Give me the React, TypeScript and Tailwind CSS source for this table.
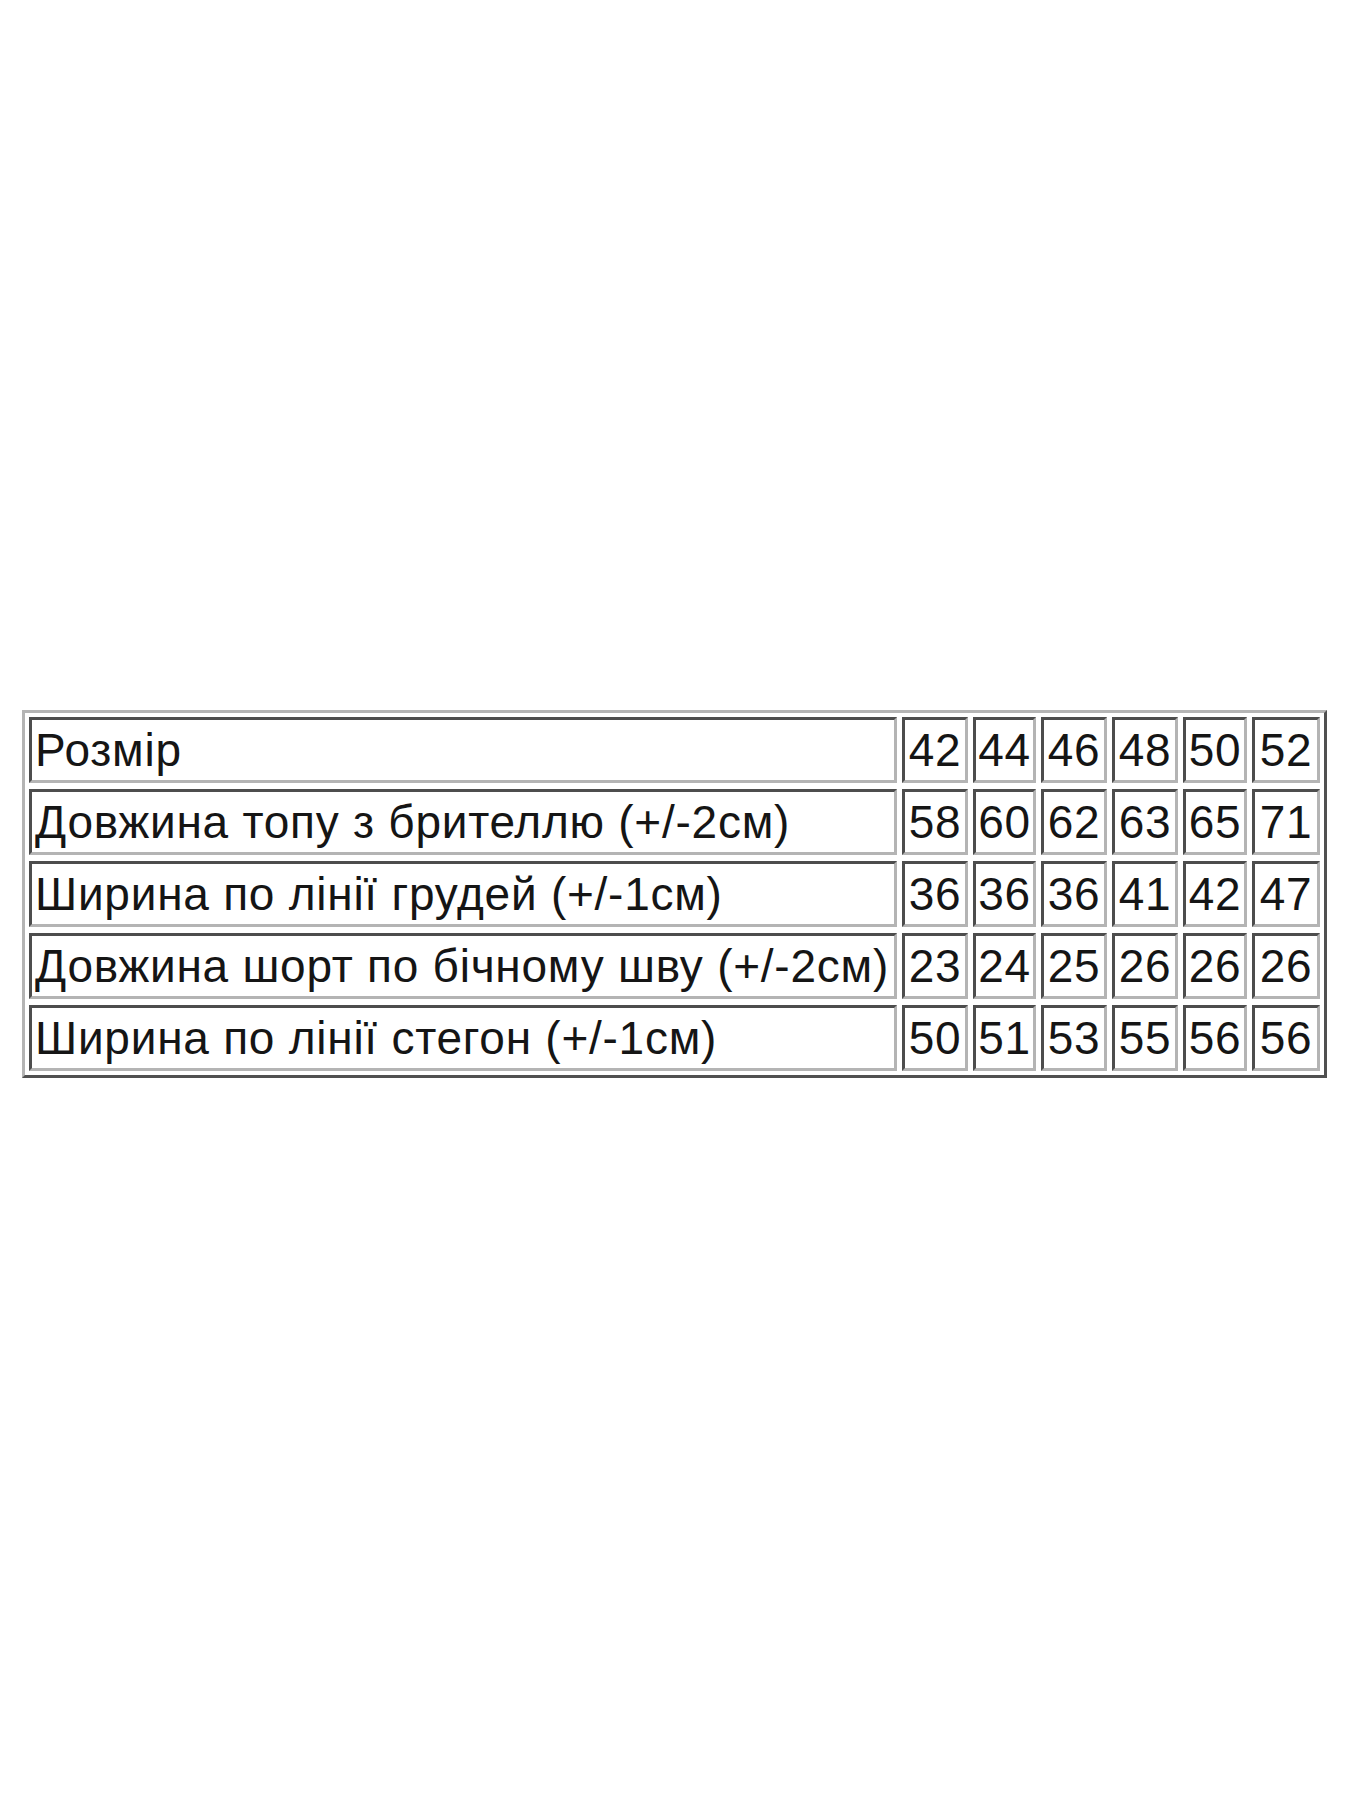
import React from 'react';

const rows: [string, string[]][] = [
    ['Розмір', ['42', '44', '46', '48', '50', '52']],
    ['Довжина топу з брителлю (+/-2см)', ['58', '60', '62', '63', '65', '71']],
    ['Ширина по лінії грудей (+/-1см)', ['36', '36', '36', '41', '42', '47']],
    ['Довжина шорт по бічному шву (+/-2см)', ['23', '24', '25', '26', '26', '26']],
    ['Ширина по лінії стегон (+/-1см)', ['50', '51', '53', '55', '56', '56']],
];

const cell =
    'h-[66px] flex items-center px-[3px] border-[3px] border-t-[#4d4d4d] border-l-[#4d4d4d] border-b-[#b4b4b4] border-r-[#b4b4b4] bg-white whitespace-nowrap';

const App: React.FC = () => {
    return (
        <div className="w-[1350px] min-h-[1800px] bg-white pt-[710px] pl-[22px]">
            <div
                className="inline-grid grid-cols-[868px_66px_63px_66px_66px_64px_68px] gap-x-[5px] gap-y-[6px] p-[4px] border-[3px] border-t-[#b4b4b4] border-l-[#b4b4b4] border-b-[#505050] border-r-[#505050] text-[46px] leading-none tracking-[0.75px] text-[#151515]"
                style={{ fontFamily: '"Liberation Sans", Arial, sans-serif' }}
            >
                {rows.map(([label, values]) => (
                    <React.Fragment key={label}>
                        <div className={cell}>{label}</div>
                        {values.map((v, i) => (
                            <div key={i} className={cell + ' justify-center'}>{v}</div>
                        ))}
                    </React.Fragment>
                ))}
            </div>
        </div>
    );
};

export default App;
